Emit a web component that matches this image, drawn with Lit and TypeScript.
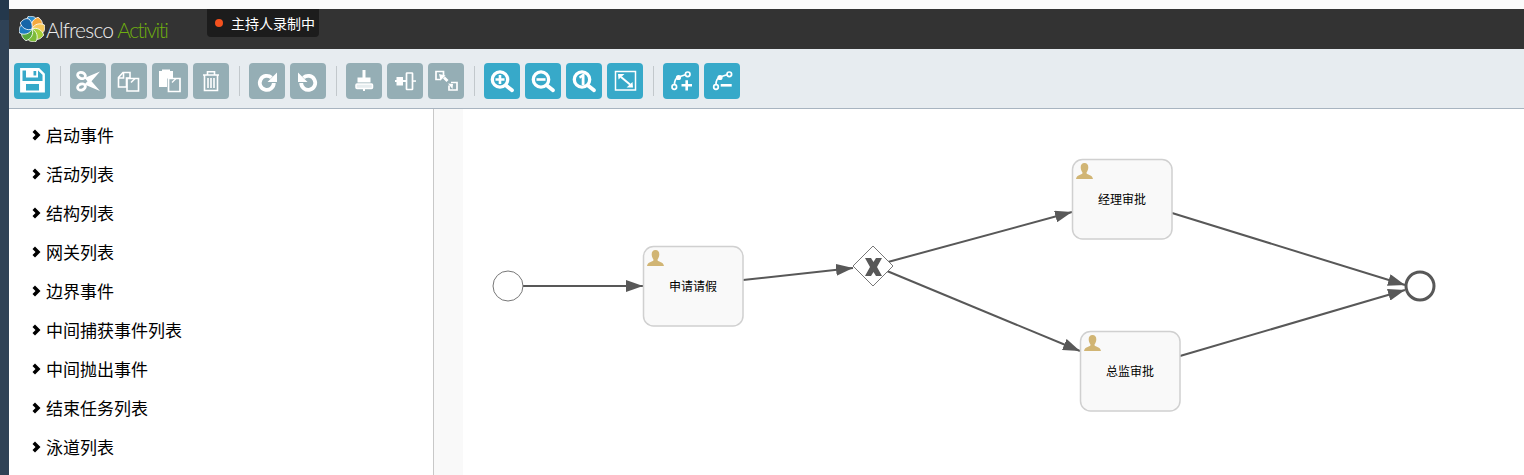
import { LitElement, html, css, svg, nothing } from 'lit';
import { customElement } from 'lit/decorators.js';

const LENS = svg`<circle cx="16" cy="16.500" r="7.700" fill="none" stroke="#fff" stroke-width="3.300"/><path d="M22 22.500l6 4.800" stroke="#fff" stroke-width="3.800" stroke-linecap="round"/>`;

const ICONS = {
  save: svg`<path d="M7.300 6.300h17.400l5 5v16.900H7.300z" fill="none" stroke="#fff" stroke-width="2.400"/><path d="M12 6h12v8.500H12z" fill="#fff"/><path d="M19.500 8h2.700v4.500h-2.700z" fill="#37a9c9"/><path d="M8 18h21v9.500H8z" fill="#fff"/><path d="M12 21h13v6.500H12z" fill="#37a9c9"/>`,
  cut: svg`<g fill="none" stroke="#fff" stroke-width="2.800"><ellipse cx="11.500" cy="12.500" rx="4" ry="3" transform="rotate(20 11.500 12.500)"/><ellipse cx="11.500" cy="24" rx="4" ry="3" transform="rotate(-20 11.500 24)"/></g><path d="M14.500 15l15.500-6.500-8.500 9.800 8.500 9.700-15.500-6.500 3-3.200z" fill="#fff"/>`,
  copy: svg`<g fill="none" stroke="#fff" stroke-width="1.600"><path d="M7.500 14.500l4.500-5h7V15h-3.500v9h-8z"/><path d="M8 15h4.500v-5"/><path d="M16 15.500h11.500V28H16z"/><path d="M20 19.500l4-4"/></g>`,
  paste: svg`<path d="M7 8h14v7.500h-6V24H7z" fill="#fff"/><path d="M10 6.500h8V9h-8z" fill="#fff"/><path d="M16.500 15.500H28v13H16.500z" fill="none" stroke="#fff" stroke-width="1.700"/><path d="M20 19.500l4-4" stroke="#fff" stroke-width="1.200"/>`,
  trash: svg`<g fill="none" stroke="#fff" stroke-width="1.600"><path d="M10 12h16M14.500 12V8.800h7V12M11.500 12v15.500h13V12"/><path d="M15 15v10M18 15v10M21 15v10"/></g>`,
  redo: svg`<path d="M24.800 20a7 7 0 1 1-2.300-5.300" fill="none" stroke="#fff" stroke-width="3.800"/><path d="M28 9.500v9.500h-9.500z" fill="#fff"/>`,
  undo: svg`<path d="M11.200 20a7 7 0 1 0 2.300-5.300" fill="none" stroke="#fff" stroke-width="3.800"/><path d="M8 9.500v9.500h9.500z" fill="#fff"/>`,
  alignH: svg`<path d="M16.500 7h3v7.500h-3zM11.500 14.500h13v5h-13z" fill="#fff"/><rect x="10" y="21" width="16.500" height="4.500" rx="1" fill="#e6edef" stroke="#fff" stroke-width="1.500"/><path d="M17 25.500h2V28h-2z" fill="#fff"/>`,
  alignV: svg`<path d="M8 17h2v2H8zM9.500 14h6.500v8.500H9.500zM16 17h3v2h-3z" fill="#fff"/><rect x="19.500" y="10" width="6" height="16.500" rx=".5" fill="none" stroke="#fff" stroke-width="1.700"/><path d="M25.500 17.300h3.500v1.500h-3.500z" fill="#fff"/>`,
  resize: svg`<g fill="none" stroke="#fff" stroke-width="1.700"><path d="M13 16.500H8V8.500h7.500v5"/><path d="M23 19.500h6v7.500h-8v-4.500"/></g><path d="M11 11l6.500 1.500-5 5z" fill="#fff"/><path d="M15 15.500l2-2 3.500 3.500-2 2zM20 20.500l5 0.500-.5 5z" fill="#fff"/>`,
  zoomIn: svg`${LENS}<path d="M11.500 15.200h3.200V12h2.600v3.200h3.200v2.600h-3.200V21h-2.600v-3.200h-3.200z" fill="#fff"/>`,
  zoomOut: svg`${LENS}<path d="M11.500 15.200h9v2.600h-9z" fill="#fff"/>`,
  zoomOne: svg`${LENS}<path d="M13 13.500l3.500-2.500h2V22h-2.800v-7.500l-1.700 1.200z" fill="#fff"/>`,
  fit: svg`<rect x="8.500" y="8.500" width="20" height="18.500" fill="none" stroke="#fff" stroke-width="1.500"/><path d="M11 11h6.500l-6 5.500zM26 24.500h-6.500l6-5.500z" fill="#fff"/><path d="M14 14l9 7.500" stroke="#fff" stroke-width="2"/>`,
  addPoint: svg`<g fill="none" stroke="#fff" stroke-width="1.700"><circle cx="11.300" cy="24" r="2.300"/><circle cx="24.700" cy="11.300" r="2.300"/><path d="M11.500 21.500c0-3.500 1.500-6.500 4-7.500l7-2.200"/></g><circle cx="15.500" cy="14.500" r="2.600" fill="#fff"/><path d="M18.500 21h3.900v-3.800h2.600V21h4v2.600h-4v4h-2.600v-4h-3.900z" fill="#fff"/>`,
  removePoint: svg`<g fill="none" stroke="#fff" stroke-width="1.700"><circle cx="12" cy="24" r="2.300"/><circle cx="25.300" cy="11.300" r="2.300"/><path d="M12 21.500c0-3.500 1.500-6.500 4-7.500l7-2.200"/></g><circle cx="16" cy="14.500" r="2.600" fill="#fff"/><path d="M16.700 21h11v2.600h-11z" fill="#fff"/>`,
};

type IconName = keyof typeof ICONS;

const TOOL_GROUPS: { name: IconName; on?: boolean }[][] = [
  [{ name: 'save', on: true }],
  [{ name: 'cut' }, { name: 'copy' }, { name: 'paste' }, { name: 'trash' }],
  [{ name: 'redo' }, { name: 'undo' }],
  [{ name: 'alignH' }, { name: 'alignV' }, { name: 'resize' }],
  [{ name: 'zoomIn', on: true }, { name: 'zoomOut', on: true }, { name: 'zoomOne', on: true }, { name: 'fit', on: true }],
  [{ name: 'addPoint', on: true }, { name: 'removePoint', on: true }],
];

const PALETTE = [
  '启动事件',
  '活动列表',
  '结构列表',
  '网关列表',
  '边界事件',
  '中间捕获事件列表',
  '中间抛出事件',
  '结束任务列表',
  '泳道列表',
];

const TASKS = [
  { x: 643, y: 246, label: '申请请假' },
  { x: 1072, y: 159, label: '经理审批' },
  { x: 1080, y: 331, label: '总监审批' },
];

const FLOWS = [
  [523, 286, 643, 286],
  [743, 280, 853, 268],
  [888, 262, 1072, 212],
  [887, 271, 1080, 351],
  [1172, 213, 1405, 285],
  [1180, 356, 1405, 290],
];

// clockwise from the top of the flower
const PETALS = ['#2a8fd0', '#f5a93c', '#f7c95a', '#a6ce39', '#7cbb3a', '#57a83b', '#1d7cc0', '#1565a8'];

@customElement('app-root')
export class AppRoot extends LitElement {
  static styles = css`
    :host {
      display: flex;
      height: 475px;
      overflow: hidden;
      background: #fff;
      font-family: 'Liberation Sans', 'Noto Sans CJK SC', sans-serif;
    }
    .strip {
      width: 9px;
      flex: none;
      background: linear-gradient(#24384c 0, #24384c 20px, #2f4256 20px);
    }
    .main {
      flex: 1;
      min-width: 0;
      display: flex;
      flex-direction: column;
    }
    .top {
      height: 9px;
      flex: none;
      background: #fafafa;
    }
    .header {
      position: relative;
      height: 40px;
      flex: none;
      background: #333;
      display: flex;
      align-items: center;
      padding-left: 10px;
      gap: 1px;
    }
    .word {
      display: flex;
      gap: 4px;
      font-family: Lato, 'Liberation Sans', sans-serif;
      font-weight: 300;
      font-size: 21px;
      letter-spacing: -0.800px;
      color: #eee;
      line-height: 24px;
      margin-top: 2px;
    }
    .word .green {
      color: #6fae10;
      letter-spacing: -1.500px;
    }
    .recording {
      position: absolute;
      left: 198px;
      top: 0;
      height: 28px;
      width: 112px;
      box-sizing: border-box;
      padding-left: 8px;
      display: flex;
      align-items: center;
      gap: 8px;
      background: #1c1c1c;
      border-radius: 0 0 4px 4px;
      color: #fff;
      font-size: 14px;
      white-space: nowrap;
    }
    .dot {
      width: 8px;
      height: 8px;
      border-radius: 50%;
      background: #f4511e;
    }
    .toolbar {
      flex: none;
      border-bottom: 1px solid #a8b4c0;
      background: #e7ecf0;
      display: flex;
      align-items: center;
      padding: 4px 0 0 5px;
      height: 55px;
    }
    .group {
      display: flex;
      gap: 5px;
    }
    .sep {
      width: 1px;
      height: 30px;
      margin: 0 9px 0 10px;
      background: #c2c8cc;
    }
    .tool {
      width: 36px;
      height: 36px;
      border-radius: 4px;
      background: #95aeb5;
    }
    .tool.on {
      background: #37a9c9;
    }
    .tool svg {
      display: block;
    }
    .body {
      flex: 1;
      min-height: 0;
      display: flex;
    }
    .palette {
      width: 425px;
      flex: none;
      box-sizing: border-box;
      border-right: 1px solid #c8c8c8;
      margin: 0;
      padding: 6px 0 0 23px;
      list-style: none;
    }
    .palette li {
      height: 39px;
      display: flex;
      align-items: center;
      gap: 5px;
      font-size: 17px;
      color: #000;
    }
    .stage {
      flex: 1;
      min-width: 0;
      background: linear-gradient(to right, #f9f9f9 29px, #fff 29px);
    }
    .canvas {
      display: block;
    }
    .label {
      font-size: 12px;
      fill: #000;
      text-anchor: middle;
    }
  `;

  private renderLogo() {
    return html`<svg width="26" height="26" viewBox="-13 -13 26 26" aria-hidden="true">
      ${PETALS.map(
        (fill, i) => svg`<path transform="rotate(${i * 45})" d="M0 0C-5 -2 -6.500 -8 -4 -12.500C0 -13.500 4 -12 5 -9C5 -5 3 -2 0 0z" fill=${fill} stroke="#fff" stroke-width=".8"/>`,
      )}
    </svg>`;
  }

  private renderChevron() {
    return html`<svg width="9" height="12" viewBox="0 0 9 12" aria-hidden="true">
      <path d="M3 .5L8.500 6 3 11.500 .5 9 3.500 6 .5 3z" fill="#000" />
    </svg>`;
  }

  private renderUser(x: number, y: number) {
    return svg`<path transform="translate(${x} ${y})" fill="#d1b574" d="M8.500 0C11 0 12.300 1.800 12.300 4.200C12.300 6.500 11.300 8.300 10.600 9.200V10.500C11.500 11.600 16.500 12 17 16H0C.5 12 5.500 11.600 6.400 10.500V9.200C5.700 8.300 4.700 6.500 4.700 4.200C4.700 1.800 6 0 8.500 0z"/>`;
  }

  private renderDiagram() {
    return html`<svg class="canvas" viewBox="434 109 1090 366" width="1090" height="366">
      <defs>
        <marker id="head" markerUnits="userSpaceOnUse" markerWidth="17" markerHeight="12" refX="17" refY="6" orient="auto">
          <path d="M0 0L17 6 0 12z" fill="#585858" />
        </marker>
      </defs>
      ${FLOWS.map(
        ([x1, y1, x2, y2]) =>
          svg`<line x1=${x1} y1=${y1} x2=${x2} y2=${y2} stroke="#585858" stroke-width="2" marker-end="url(#head)"/>`,
      )}
      <circle cx="508" cy="286" r="15" fill="#fff" stroke="#777" />
      ${TASKS.map(
        (t) => svg`
          <rect x=${t.x + 0.5} y=${t.y + 0.5} width="99.500" height="79.500" rx="10" fill="#f9f9f9" stroke="#d0d0d0" stroke-width="1.500"/>
          ${this.renderUser(t.x + 4, t.y + 4)}
          <text class="label" x=${t.x + 50} y=${t.y + 45}>${t.label}</text>
        `,
      )}
      <path d="M873 246L893 266 873 286 853 266z" fill="#fff" stroke="#777" />
      <path d="M865 258h6l2.500 4 2.500-4h6l-5 9 5 9h-6l-2.500-4-2.500 4h-6l5-9z" fill="#585858" />
      <circle cx="1420" cy="286" r="14" fill="#fff" stroke="#585858" stroke-width="3" />
    </svg>`;
  }

  render() {
    return html`
      <div class="strip"></div>
      <div class="main">
        <div class="top"></div>
        <div class="header">
          ${this.renderLogo()}
          <span class="word"><span>Alfresco</span><span class="green">Activiti</span></span>
          <div class="recording"><span class="dot"></span>主持人录制中</div>
        </div>
        <div class="toolbar">
          ${TOOL_GROUPS.map(
            (group, i) => html`
              ${i > 0 ? html`<div class="sep"></div>` : nothing}
              <div class="group">
                ${group.map(
                  (t) => html`<div class="tool ${t.on ? 'on' : ''}">
                    <svg width="36" height="36" viewBox="0 0 36 36">${ICONS[t.name]}</svg>
                  </div>`,
                )}
              </div>
            `,
          )}
        </div>
        <div class="body">
          <ul class="palette">
            ${PALETTE.map((item) => html`<li>${this.renderChevron()}${item}</li>`)}
          </ul>
          <div class="stage">${this.renderDiagram()}</div>
        </div>
      </div>
    `;
  }
}
